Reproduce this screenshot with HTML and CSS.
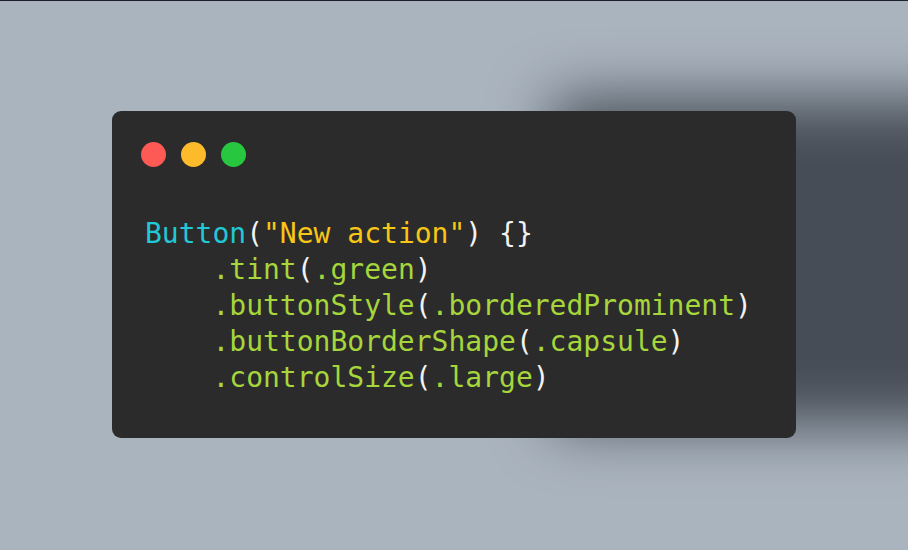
FILE: index.html
```html
<!DOCTYPE html>
<html>
<head>
<meta charset="utf-8">
<link rel="stylesheet" href="styles.css">
</head>
<body>
<div class="stage">
  <div class="card">
    <div class="dots">
      <span class="dot red"></span>
      <span class="dot yellow"></span>
      <span class="dot green"></span>
    </div>
<pre class="code"><span class="type">Button</span><span class="p">(</span><span class="str">"New action"</span><span class="p">) {}</span>
    <span class="mod">.tint</span><span class="p">(</span><span class="mod">.green</span><span class="p">)</span>
    <span class="mod">.buttonStyle</span><span class="p">(</span><span class="mod">.borderedProminent</span><span class="p">)</span>
    <span class="mod">.buttonBorderShape</span><span class="p">(</span><span class="mod">.capsule</span><span class="p">)</span>
    <span class="mod">.controlSize</span><span class="p">(</span><span class="mod">.large</span><span class="p">)</span></pre>
  </div>
</div>
</body>
</html>
```
FILE: styles.css
```css
html, body {
  margin: 0;
  padding: 0;
}
body {
  background: #aab4bf;
  border-top: 1px solid #1c2028;
  height: 549px;
  overflow: hidden;
}
.stage {
  padding: 110px 0 0 112px;
}
.card {
  width: 684px;
  height: 327px;
  box-sizing: border-box;
  background: #2b2b2b;
  border-radius: 9px;
  padding: 31px 30px 0 29px;
  box-shadow: 440px -12px 60px rgba(20, 24, 32, 0.66);
}
.dots {
  display: flex;
  gap: 15px;
}
.dot {
  width: 25px;
  height: 25px;
  border-radius: 50%;
}
.red { background: #fd5955; }
.yellow { background: #fdbb2c; }
.green { background: #27c840; }
.code {
  margin: 49px 0 0 4px;
  font-family: "DejaVu Sans Mono", monospace;
  font-size: 28px;
  line-height: 36px;
  color: #f2f2f2;
}
.type { color: #22c8d6; }
.str { color: #f7c616; }
.mod { color: #a6d63c; }
.p { color: #f2f2f2; }
```
